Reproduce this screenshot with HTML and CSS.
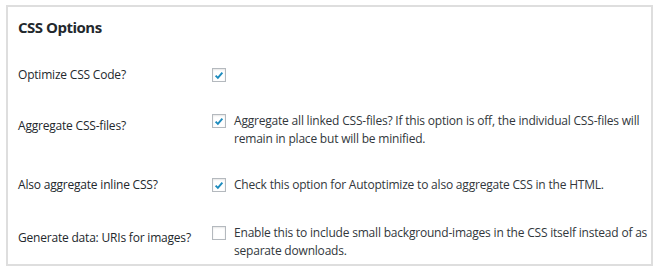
FILE: index.html
```html
<!DOCTYPE html>
<html lang="en">
<head>
  <meta charset="UTF-8">
  <title>CSS Options</title>
  <link rel="stylesheet" href="styles.css">
</head>
<body>
  <div class="postbox">
    <h2>CSS Options</h2>

    <!-- Optimize -->
    <div class="row">
      <div class="label">Optimize CSS Code?</div>
      <div class="control">
        <span class="check is-on"><svg viewBox="0 0 16 16"><path d="M3.5 8.2l3 3 6-7"/></svg></span>
      </div>
    </div>

    <!-- Aggregate files -->
    <div class="row tall">
      <div class="label">Aggregate CSS-files?</div>
      <div class="control">
        <span class="check is-on"><svg viewBox="0 0 16 16"><path d="M3.5 8.2l3 3 6-7"/></svg></span>
        <span class="desc">Aggregate all linked CSS-files? If this option is off, the individual CSS-files will remain in place but will be minified.</span>
      </div>
    </div>

    <!-- Inline CSS -->
    <div class="row">
      <div class="label">Also aggregate inline CSS?</div>
      <div class="control">
        <span class="check is-on"><svg viewBox="0 0 16 16"><path d="M3.5 8.2l3 3 6-7"/></svg></span>
        <span class="desc">Check this option for Autoptimize to also aggregate CSS in the HTML.</span>
      </div>
    </div>

    <!-- Data URIs -->
    <div class="row tall last">
      <div class="label">Generate data: URIs for images?</div>
      <div class="control">
        <span class="check"></span>
        <span class="desc">Enable this to include small background-images in the CSS itself instead of as separate downloads.</span>
      </div>
    </div>
  </div>
</body>
</html>
```

FILE: styles.css
```css
body {
  margin: 0;
  background: #fff;
  font-family: "Open Sans", sans-serif;
  font-size: 12px;
  letter-spacing: -0.2px;
  color: #32373c;
}
.postbox {
  box-sizing: border-box;
  width: 647px;
  margin: 5px 0 0 6px;
  border: 2px solid #dedede;
}
h2 {
  margin: 0 0 15px;
  padding: 10px 10px 0;
  font-size: 15px;
  line-height: 20px;
  font-weight: 700;
  letter-spacing: -0.5px;
  color: #23282d;
}
.row {
  display: grid;
  grid-template-columns: 194px 1fr;
  padding: 14px 2px 14px 10px;
  line-height: 18px;
}
.row.last {
  padding-top: 16px;
  padding-bottom: 4px;
}
.label {
  color: #23282d;
}
.row.tall .label {
  padding-top: 5px;
}
.control {
  display: flex;
  align-items: flex-start;
  gap: 8px;
}
.check {
  box-sizing: border-box;
  flex: none;
  width: 14px;
  height: 14px;
  margin-top: 2px;
  border: 1px solid #b4b9be;
  background: #fff;
  box-shadow: inset 0 1px 2px rgba(0,0,0,0.1);
  display: flex;
  align-items: center;
  justify-content: center;
}
.check svg {
  width: 13px;
  height: 13px;
  fill: none;
  stroke: #1e8cbe;
  stroke-width: 2.6;
}
.desc {
  color: #32373c;
}
```
